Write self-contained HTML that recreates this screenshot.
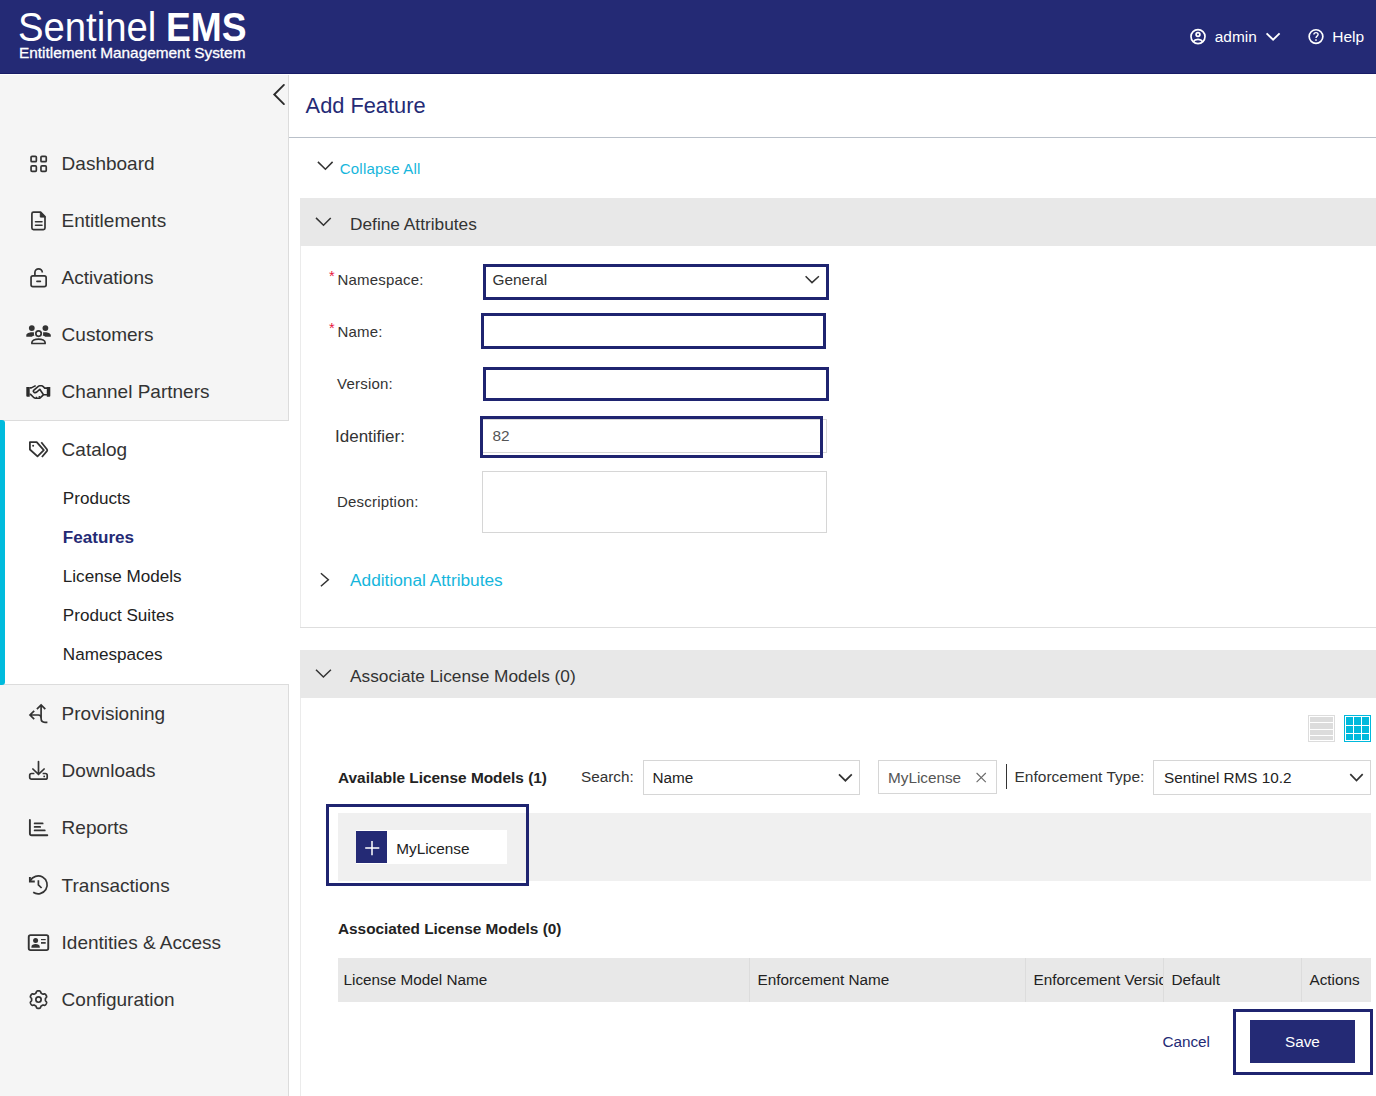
<!DOCTYPE html>
<html><head><meta charset="utf-8"><title>Sentinel EMS</title>
<style>
*{box-sizing:border-box;margin:0;padding:0}
html,body{width:1376px;height:1096px;overflow:hidden;background:#fff}
body{font-family:"Liberation Sans",sans-serif;color:#333;position:relative}
.abs,.t{position:absolute;white-space:nowrap}
.t{line-height:20px}
#hdr{position:absolute;left:0;top:0;width:1376px;height:74px;background:#242a75;border-bottom:1px solid #181c66}
#side{position:absolute;left:0;top:75px;width:289px;height:346px;background:#f5f5f5;border-right:1px solid #dcdcdc;border-bottom:1px solid #dcdcdc}
#side2{position:absolute;left:0;top:684px;width:289px;height:412px;background:#f5f5f5;border-right:1px solid #dcdcdc;border-top:1px solid #dcdcdc}
#catbar{position:absolute;left:0;top:420px;width:5px;height:265px;background:#00bbdd;border-radius:0 3px 3px 0}
.nav{font-size:19px;color:#333;left:61.6px}
.sub{font-size:17.1px;color:#222;left:62.8px}
.lbl{font-size:15px;color:#333}
.navy{color:#242a75}
.cy{color:#16b6dc}
.ph{position:absolute;left:300px;width:1076px;background:#e8e8e8}
.hl{position:absolute;border:3px solid #1f2470;background:transparent}
.inp{position:absolute;border:1px solid #d6d6d6;background:#fff}
</style></head><body>
<!-- HEADER -->
<div id="hdr">
<div class="abs" id="lg1" style="left:18px;top:5px;font-size:40px;line-height:44px;color:#fff;transform-origin:0 50%"><span id="lgS" style="display:inline-block;transform-origin:0 50%;transform:scaleX(.957)">Sentinel</span><span id="lgE" style="position:absolute;left:148px;top:0;font-weight:700;display:inline-block;transform-origin:0 50%;transform:scaleX(.93)">EMS</span></div>
<div class="abs" id="lg2" style="left:19px;top:43px;font-size:15px;line-height:20px;color:#fff;transform-origin:0 50%;transform:scaleX(1.025);-webkit-text-stroke:.3px #fff">Entitlement Management System</div>
<svg class="abs" style="left:1188px;top:27px" width="20" height="20" viewBox="0 0 20 20" fill="none" stroke="#fff" stroke-width="1.7"><circle cx="10" cy="9.6" r="7"/><circle cx="10" cy="7.5" r="1.9"/><path d="M5.3 14.7c1-1.6 2.7-2.3 4.7-2.3s3.7.7 4.7 2.3"/></svg>
<div class="t" style="left:1214.8px;top:27px;font-size:15.4px;color:#fff">admin</div>
<svg class="abs" style="left:1264px;top:30px" width="18" height="14" viewBox="0 0 18 14" fill="none" stroke="#fff" stroke-width="1.9"><path d="M2.6 3.4l6.5 6.3 6.5-6.3"/></svg>
<svg class="abs" style="left:1305.6px;top:26.7px" width="20" height="20" viewBox="0 0 20 20" fill="none" stroke="#fff" stroke-width="1.7"><circle cx="10" cy="9.6" r="6.85"/><path d="M7.9 7.6c0-1.3 1-2 2.1-2s2.1.8 2.1 1.9c0 1.6-2.1 1.7-2.1 3.4" stroke-width="1.4"/><circle cx="10" cy="13" r=".6" fill="#fff" stroke-width=".6"/></svg>
<div class="t" style="left:1332.2px;top:27px;font-size:15.5px;color:#fff">Help</div>
</div>
<!-- SIDEBAR -->
<div id="side"></div>
<div id="side2"></div><div id="catbar"></div>
<svg class="abs" style="left:268px;top:80px" width="22" height="30" viewBox="0 0 22 30" fill="none" stroke="#2c2c2c" stroke-width="1.9" stroke-linecap="round" stroke-linejoin="miter"><path d="M15.9 4.9L6.3 14.5L15.9 24.1"/></svg>
<svg class="abs" style="left:22px;top:148px" width="32" height="32" viewBox="0 0 32 32" fill="none" stroke="#333" stroke-width="1.7" stroke-linecap="round" stroke-linejoin="round" ><rect x="9.05" y="8.3" width="5.3" height="5.4" rx="1"/><rect x="18.95" y="8.3" width="5.3" height="5.4" rx="1"/><rect x="9.05" y="17.9" width="5.3" height="5.4" rx="1"/><rect x="18.95" y="17.9" width="5.3" height="5.4" rx="1"/></svg>
<svg class="abs" style="left:22px;top:205px" width="32" height="32" viewBox="0 0 32 32" fill="none" stroke="#333" stroke-width="1.7" stroke-linecap="round" stroke-linejoin="round" ><path d="M11.5 7.2H18.6L23 11.6V23a1.6 1.6 0 0 1-1.6 1.6H11.5a1.6 1.6 0 0 1-1.6-1.6V8.8a1.6 1.6 0 0 1 1.6-1.6z"/><path d="M18.3 7.6V12.1H22.8z" fill="#333" stroke-width="1"/><path d="M13.5 16.8H20M13.5 20.2H20" stroke-width="1.6"/></svg>
<svg class="abs" style="left:22px;top:262px" width="32" height="32" viewBox="0 0 32 32" fill="none" stroke="#333" stroke-width="1.7" stroke-linecap="round" stroke-linejoin="round" ><rect x="9.05" y="13.95" width="15.1" height="10.6" rx="1.8"/><path d="M12.9 13.9V10.5a3.7 3.7 0 0 1 7.4 0" stroke-linecap="butt"/><path d="M14.9 19.4H18.4" stroke-width="1.6"/></svg>
<svg class="abs" style="left:22px;top:319px" width="32" height="32" viewBox="0 0 32 32" fill="none" stroke="#333" stroke-width="1.7" stroke-linecap="round" stroke-linejoin="round" ><circle cx="9.8" cy="9.05" r="2.9" fill="#333" stroke="none"/><circle cx="23.4" cy="9.05" r="2.9" fill="#333" stroke="none"/><path d="M4.3 17.8V16.3C4.3 14.3 7.5 13.3 9.8 13.3c1 0 1.8.1 2.4.3-.4.8-.4 2 .2 2.8-1 .3-1.9.8-2.6 1.4z" fill="#333" stroke="none"/><path d="M28.8 17.8V16.3C28.8 14.3 25.6 13.3 23.3 13.3c-1 0-1.8.1-2.4.3.4.8.4 2-.2 2.8 1 .3 1.9.8 2.6 1.4z" fill="#333" stroke="none"/><circle cx="16.55" cy="14.6" r="2.7"/><path d="M9.9 24.5H23.1V23.6C23.1 21.5 20 20.1 16.5 20.1S9.9 21.5 9.9 23.6z"/></svg>
<svg class="abs" style="left:22px;top:376px" width="32" height="32" viewBox="0 0 32 32" fill="none" stroke="#2b2b2b" stroke-width="1.6" stroke-linecap="butt" stroke-linejoin="round"><path d="M4.3 11.1H7.7V20.7H5.3Q4.3 20.7 4.3 19.7z" fill="#2b2b2b" stroke="none"/><path d="M24.8 11.1H28.3V19.7Q28.3 20.7 27.3 20.7H24.8z" fill="#2b2b2b" stroke="none"/><path d="M7.6 11.9H9.3L13.7 9.6M11.6 14.3L16.3 10.3Q16.9 9.8 17.7 9.8H19.7Q20.5 9.8 21 10.4L22.7 12.1H25M11.6 14.3Q10.8 15.4 11.9 16.2Q13.4 17.1 14.8 16L17.8 13.3L21.5 18.7H25M7.6 18.4H8.6L12 21.7Q12.6 22.2 13.4 22.2H17Q17.8 22.2 18.4 21.6L21.4 18.8"/><path d="M14.4 22V20.7M17.3 21.6V20.1" stroke-width="1.3"/></svg>
<svg class="abs" style="left:22px;top:433px" width="32" height="32" viewBox="0 0 32 32" fill="none" stroke="#333" stroke-width="1.7" stroke-linecap="round" stroke-linejoin="round" ><path d="M7.9 9.2H14.7L21.8 17.2L15.5 23.3L7.9 16.5z" stroke-width="1.8"/><path d="M19.3 9.3L24.9 16.2Q25.6 17.2 24.9 18.1L19.9 24" stroke-width="1.8" stroke-linecap="butt"/><circle cx="11.1" cy="12.7" r="1" fill="#333" stroke="none"/></svg>
<svg class="abs" style="left:22px;top:697px" width="32" height="32" viewBox="0 0 32 32" fill="none" stroke="#333" stroke-width="1.7" stroke-linecap="round" stroke-linejoin="round" ><path d="M19.1 8.2V21.5Q19.1 25.3 23 25.3H25.4M14.9 12.2L19.1 8L23.3 12.2M8.2 18H16.3Q19.1 18 19.1 21M12.2 13.9L8 18L12.2 22.1" stroke-linecap="butt" stroke-linejoin="miter"/></svg>
<svg class="abs" style="left:22px;top:754px" width="32" height="32" viewBox="0 0 32 32" fill="none" stroke="#333" stroke-width="1.7" stroke-linecap="round" stroke-linejoin="round" ><path d="M16.5 7.6V20M10.9 15L16.5 20.4L22.1 15" stroke-linejoin="miter"/><path d="M12.4 19.5H9.5a1.8 1.8 0 0 0-1.8 1.8V23.4a1.8 1.8 0 0 0 1.8 1.8H23.4a1.8 1.8 0 0 0 1.8-1.8V21.3a1.8 1.8 0 0 0-1.8-1.8H20.6" stroke-linecap="butt"/><circle cx="22.2" cy="22.4" r=".9" fill="#333" stroke="none"/></svg>
<svg class="abs" style="left:22px;top:811px" width="32" height="32" viewBox="0 0 32 32" fill="none" stroke="#333" stroke-width="1.7" stroke-linecap="round" stroke-linejoin="round" ><path d="M7.9 8.9V22.4Q7.9 24.2 9.7 24.2H25.3" stroke-width="1.9"/><path d="M12.6 12.4H20.7M12.6 15.9H18.2M12.6 19.4H22.8"/></svg>
<svg class="abs" style="left:22px;top:869px" width="32" height="32" viewBox="0 0 32 32" fill="none" stroke="#333" stroke-width="1.7" stroke-linecap="round" stroke-linejoin="round" ><path d="M8.2 11.9A8.95 8.95 0 1 1 11.2 23.3" stroke-linecap="butt"/><path d="M7.9 8V12.5H12.8" stroke-linecap="butt" stroke-linejoin="miter" stroke-width="1.9"/><path d="M16.4 11.3V15.9L19.6 19" stroke-linecap="butt" stroke-linejoin="miter"/></svg>
<svg class="abs" style="left:22px;top:926px" width="32" height="32" viewBox="0 0 32 32" fill="none" stroke="#333" stroke-width="1.7" stroke-linecap="round" stroke-linejoin="round" ><rect x="6.75" y="9.15" width="19.5" height="15" rx="1.8" stroke-width="1.9"/><circle cx="13.6" cy="14.4" r="2.5" fill="#333" stroke="none"/><path d="M9.4 21.7V20.9C9.4 19 11.5 18.1 13.6 18.1S17.8 19 17.8 20.9V21.7z" fill="#333" stroke="none"/><path d="M19 13.6H23.7" stroke-width="1.2" stroke-linecap="butt"/><path d="M19 16.9H23.7" stroke-width="1.7" stroke-linecap="butt"/></svg>
<svg class="abs" style="left:22px;top:983px" width="32" height="32" viewBox="0 0 32 32" fill="none" stroke="#333" stroke-width="1.7" stroke-linecap="round" stroke-linejoin="round" ><path d="M23.38 16.60L23.38 16.90L23.38 17.20L23.41 17.51L23.53 17.84L23.84 18.23L24.27 18.68L24.57 19.14L24.62 19.56L24.55 19.93L24.42 20.29L24.26 20.64L24.08 20.98L23.88 21.30L23.66 21.61L23.41 21.91L23.12 22.16L22.74 22.31L22.19 22.29L21.58 22.14L21.09 22.07L20.74 22.13L20.46 22.26L20.20 22.40L19.94 22.55L19.68 22.70L19.42 22.86L19.17 23.04L18.94 23.31L18.76 23.77L18.58 24.37L18.33 24.86L18.00 25.11L17.64 25.24L17.26 25.31L16.88 25.34L16.50 25.35L16.12 25.34L15.74 25.31L15.36 25.24L15.00 25.11L14.67 24.86L14.42 24.37L14.24 23.77L14.06 23.31L13.83 23.04L13.58 22.86L13.32 22.70L13.06 22.55L12.80 22.40L12.54 22.26L12.26 22.13L11.91 22.07L11.42 22.14L10.81 22.29L10.26 22.31L9.88 22.16L9.59 21.91L9.34 21.61L9.12 21.30L8.92 20.98L8.74 20.64L8.58 20.29L8.45 19.93L8.38 19.56L8.43 19.14L8.73 18.68L9.16 18.23L9.47 17.84L9.59 17.51L9.62 17.20L9.62 16.90L9.62 16.60L9.62 16.30L9.62 16.00L9.59 15.69L9.47 15.36L9.16 14.97L8.73 14.52L8.43 14.06L8.38 13.64L8.45 13.27L8.58 12.91L8.74 12.56L8.92 12.23L9.12 11.90L9.34 11.59L9.59 11.29L9.88 11.04L10.26 10.89L10.81 10.91L11.42 11.06L11.91 11.13L12.26 11.07L12.54 10.94L12.80 10.80L13.06 10.65L13.32 10.50L13.58 10.34L13.83 10.16L14.06 9.89L14.24 9.43L14.42 8.83L14.67 8.34L15.00 8.09L15.36 7.96L15.74 7.89L16.12 7.86L16.50 7.85L16.88 7.86L17.26 7.89L17.64 7.96L18.00 8.09L18.33 8.34L18.58 8.83L18.76 9.43L18.94 9.89L19.17 10.16L19.42 10.34L19.68 10.50L19.94 10.65L20.20 10.80L20.46 10.94L20.74 11.07L21.09 11.13L21.58 11.06L22.19 10.91L22.74 10.89L23.12 11.04L23.41 11.29L23.66 11.59L23.88 11.90L24.08 12.23L24.26 12.56L24.42 12.91L24.55 13.27L24.62 13.64L24.57 14.06L24.27 14.52L23.84 14.97L23.53 15.36L23.41 15.69L23.38 16.00L23.38 16.30Z"/><circle cx="16.5" cy="16.6" r="2.65"/></svg>
<div class="t nav" style="top:154px">Dashboard</div>
<div class="t nav" style="top:211px">Entitlements</div>
<div class="t nav" style="top:268px">Activations</div>
<div class="t nav" style="top:325px">Customers</div>
<div class="t nav" style="top:382px">Channel Partners</div>
<div class="t nav" style="top:440px">Catalog</div>
<div class="t nav" style="top:704px">Provisioning</div>
<div class="t nav" style="top:761px">Downloads</div>
<div class="t nav" style="top:818px">Reports</div>
<div class="t nav" style="top:876px">Transactions</div>
<div class="t nav" style="top:933px">Identities &amp; Access</div>
<div class="t nav" style="top:990px">Configuration</div>
<div class="t sub" style="top:488.8px">Products</div>
<div class="t sub" style="top:527.8px;font-weight:700;color:#242a75">Features</div>
<div class="t sub" style="top:566.8px">License Models</div>
<div class="t sub" style="top:605.8px">Product Suites</div>
<div class="t sub" style="top:644.8px">Namespaces</div>

<!-- MAIN -->
<div id="main">
<div class="t navy" id="ttl" style="left:305.6px;top:96px;font-size:21.8px">Add Feature</div>
<div class="abs" style="left:289px;top:137px;width:1087px;height:1px;background:#b9c0c9"></div>
<svg class="abs" style="left:314px;top:158px" width="22" height="16" viewBox="0 0 22 16" fill="none" stroke="#333" stroke-width="1.5"><path d="M3.9 3.9L11.4 11.2L18.6 3.9"/></svg>
<div class="t cy" id="coll" style="left:339.8px;top:159px;font-size:15px;letter-spacing:.2px">Collapse All</div>
<!-- panel 1 -->
<div class="ph" style="top:198px;height:48px"></div>
<div class="abs" style="left:300px;top:246px;width:1px;height:382px;background:#ebebeb"></div>
<div class="abs" style="left:300px;top:627px;width:1076px;height:1px;background:#dedede"></div>
<svg class="abs" style="left:312px;top:214px" width="22" height="16" viewBox="0 0 22 16" fill="none" stroke="#333" stroke-width="1.5"><path d="M4 3.9L11.5 11.3L18.75 3.9"/></svg>
<div class="t" id="defa" style="left:350px;top:214px;font-size:17.3px;color:#333">Define Attributes</div>
<div class="t" style="left:329px;top:266.3px;font-size:14.6px;color:#e8173c">*</div>
<div class="t lbl" id="l1" style="left:337.5px;top:269.8px;letter-spacing:.2px">Namespace:</div>
<div class="t" style="left:329px;top:318.3px;font-size:14.6px;color:#e8173c">*</div>
<div class="t lbl" id="l2" style="left:337.4px;top:321.8px;letter-spacing:.2px">Name:</div>
<div class="t lbl" id="l3" style="left:337.1px;top:374px;letter-spacing:.2px">Version:</div>
<div class="t" id="l4" style="left:335px;top:426.5px;font-size:17px;color:#333">Identifier:</div>
<div class="t lbl" id="l5" style="left:337px;top:492px;letter-spacing:.2px">Description:</div>
<div class="hl" style="left:483px;top:264px;width:346px;height:36px"></div>
<div class="t" id="gen" style="left:492.5px;top:269.7px;font-size:15.4px;color:#333">General</div>
<svg class="abs" style="left:802px;top:272px" width="20" height="16" viewBox="0 0 20 16" fill="none" stroke="#333" stroke-width="1.5"><path d="M3.6 4.2L10 10.6L16.9 4.2"/></svg>
<div class="hl" style="left:481px;top:313px;width:345px;height:36px"></div>
<div class="hl" style="left:483px;top:367px;width:346px;height:34px"></div>
<div class="inp" style="left:482px;top:419px;width:345px;height:34px"></div>
<div class="t" id="v82" style="left:492.4px;top:425.6px;font-size:15.4px;color:#555">82</div>
<div class="hl" style="left:480px;top:416px;width:343px;height:42px"></div>
<div class="inp" style="left:482px;top:471px;width:345px;height:62px"></div>
<svg class="abs" style="left:314.5px;top:568px" width="20" height="24" viewBox="0 0 20 24" fill="none" stroke="#333" stroke-width="1.5"><path d="M5.9 5.2L13.3 11.7L5.9 18.3"/></svg>
<div class="t cy" id="adda" style="left:350px;top:570px;font-size:17.3px">Additional Attributes</div>
<!-- panel 2 -->
<div class="ph" style="top:650px;height:48px"></div>
<div class="abs" style="left:300px;top:698px;width:1px;height:398px;background:#ebebeb"></div>
<svg class="abs" style="left:312px;top:666px" width="22" height="16" viewBox="0 0 22 16" fill="none" stroke="#333" stroke-width="1.5"><path d="M4 3.7L11.4 11L18.9 3.7"/></svg>
<div class="t" id="assoc" style="left:350px;top:666px;font-size:17.3px;color:#333">Associate License Models (0)</div>
<!-- view icons -->
<div class="abs" style="left:1308px;top:715px;width:27px;height:27px;border:1px solid #dcdcdc;background:#fff"></div>
<div class="abs" style="left:1310px;top:717px;width:23px;height:5px;background:#dcdcdc"></div>
<div class="abs" style="left:1310px;top:723px;width:23px;height:6px;background:#dcdcdc"></div>
<div class="abs" style="left:1310px;top:730px;width:23px;height:5px;background:#dcdcdc"></div>
<div class="abs" style="left:1310px;top:736px;width:23px;height:4px;background:#dcdcdc"></div>
<svg class="abs" style="left:1344px;top:715px" width="27" height="27" viewBox="0 0 27 27"><rect x=".5" y=".5" width="26" height="26" fill="#fff" stroke="#00b9dc"/><g fill="#00b9dc"><rect x="2" y="2" width="7" height="8"/><rect x="10" y="2" width="7" height="8"/><rect x="18" y="2" width="7" height="8"/><rect x="2" y="11" width="7" height="7"/><rect x="10" y="11" width="7" height="7"/><rect x="18" y="11" width="7" height="7"/><rect x="2" y="19" width="7" height="6"/><rect x="10" y="19" width="7" height="6"/><rect x="18" y="19" width="7" height="6"/></g></svg>
<!-- search row -->
<div class="t" id="avail" style="left:338px;top:768px;font-size:15.4px;font-weight:700;color:#222">Available License Models (1)</div>
<div class="t" id="srch" style="left:581px;top:767px;font-size:15.3px;color:#333">Search:</div>
<div class="inp" style="left:643px;top:760px;width:217px;height:35px"></div>
<div class="t" id="nm" style="left:652.5px;top:767.5px;font-size:15.3px;color:#222">Name</div>
<svg class="abs" style="left:835px;top:770px" width="20" height="16" viewBox="0 0 20 16" fill="none" stroke="#333" stroke-width="1.7"><path d="M4 4.3L10.4 10.7L16.8 4.3"/></svg>
<div class="inp" style="left:878px;top:760px;width:119px;height:34px"></div>
<div class="t" id="myl2" style="left:888px;top:768px;font-size:15.3px;color:#555">MyLicense</div>
<svg class="abs" style="left:972px;top:769px" width="18" height="18" viewBox="0 0 18 18" fill="none" stroke="#6a6a6a" stroke-width="1.1"><path d="M4.6 4L13.8 13.2M13.8 4L4.6 13.2"/></svg>
<div class="abs" style="left:1006px;top:764px;width:1px;height:25px;background:#333"></div>
<div class="t" id="enf" style="left:1014.5px;top:767px;font-size:15.5px;color:#333">Enforcement Type:</div>
<div class="inp" style="left:1153px;top:760px;width:218px;height:35px"></div>
<div class="t" id="rms" style="left:1164px;top:768px;font-size:15.3px;color:#222">Sentinel RMS 10.2</div>
<svg class="abs" style="left:1346px;top:770px" width="20" height="16" viewBox="0 0 20 16" fill="none" stroke="#333" stroke-width="1.7"><path d="M4.3 4.2L10.5 10.6L16.7 4.2"/></svg>
<!-- available band -->
<div class="abs" style="left:338px;top:813px;width:1033px;height:68px;background:#f0f0f0"></div>
<div class="abs" style="left:356px;top:830px;width:151px;height:34px;background:#fff"></div>
<div class="abs" style="left:356px;top:831px;width:31px;height:32px;background:#242a75"></div>
<svg class="abs" style="left:356px;top:831px" width="31" height="32" viewBox="0 0 31 32" fill="none" stroke="#fff" stroke-width="1.5"><path d="M9.2 17.1H23.3M16 10V24.2"/></svg>
<div class="t" id="myl1" style="left:396.2px;top:839px;font-size:15.35px;color:#222">MyLicense</div>
<div class="hl" style="left:326px;top:804px;width:203px;height:82px"></div>
<!-- associated -->
<div class="t" id="asd" style="left:338px;top:919px;font-size:15.35px;font-weight:700;color:#222">Associated License Models (0)</div>
<div class="abs" style="left:338px;top:958px;width:1033px;height:44px;background:#e8e8e8"></div>
<div class="abs" style="left:749px;top:958px;width:1px;height:44px;background:#dcdcdc"></div>
<div class="abs" style="left:1025px;top:958px;width:1px;height:44px;background:#dcdcdc"></div>
<div class="abs" style="left:1163px;top:958px;width:1px;height:44px;background:#dcdcdc"></div>
<div class="abs" style="left:1301px;top:958px;width:1px;height:44px;background:#dcdcdc"></div>
<div class="t th" id="th1" style="left:343.5px;top:970px;font-size:15.3px;color:#222">License Model Name</div>
<div class="t th" id="th2" style="left:757.5px;top:970px;font-size:15.3px;color:#222">Enforcement Name</div>
<div class="t th" id="th3" style="left:1033.5px;top:970px;font-size:15.3px;color:#222;width:129px;overflow:hidden">Enforcement Version</div>
<div class="t th" id="th4" style="left:1171.5px;top:970px;font-size:15.3px;color:#222">Default</div>
<div class="t th" id="th5" style="left:1309.5px;top:970px;font-size:15.3px;color:#222">Actions</div>
<!-- buttons -->
<div class="t navy" id="cnc" style="left:1162.4px;top:1032px;font-size:15.3px">Cancel</div>
<div class="abs" style="left:1250px;top:1020px;width:105px;height:43px;background:#242a75"></div>
<div class="t" id="sav" style="left:1285px;top:1032px;font-size:15.3px;color:#fff">Save</div>
<div class="hl" style="left:1233px;top:1009px;width:140px;height:66px"></div>
</div>
</body></html>
